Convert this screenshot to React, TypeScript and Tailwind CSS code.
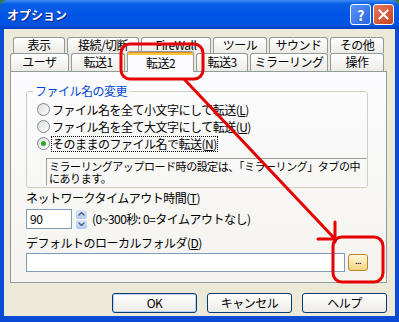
import React from "react";

const jp = "font-['Noto_Sans_CJK_JP','Noto_Sans',sans-serif]";

function Tab({ label, w, selected }: { label: string; w: number; selected?: boolean }) {
  if (selected) {
    return (
      <div
        style={{ width: w }}
        className="relative z-10 -mb-px flex h-[21px] flex-col overflow-hidden rounded-t-[3px] border border-b-0 border-[#919B9C] bg-[#FCFCFE]"
      >
        <div className="h-[1px] bg-[#E68B2C]" />
        <div className="h-[2px] bg-[#FFC83C]" />
        <div className="flex flex-1 items-center justify-center pb-[2px]">{label}</div>
      </div>
    );
  }
  return (
    <div
      style={{ width: w }}
      className="flex h-full items-center justify-center rounded-t-[3px] border border-b-0 border-[#919B9C] bg-gradient-to-b from-white to-[#ECEBE6] pb-px"
    >
      {label}
    </div>
  );
}

function Radio({ checked, children, focus }: { checked?: boolean; children: React.ReactNode; focus?: boolean }) {
  return (
    <div className="flex h-[17px] items-center gap-[2px]">
      <span className="flex size-[13px] items-center justify-center rounded-full border border-[#7C8996] bg-gradient-to-br from-[#DCDCD7] to-white">
        {checked ? <span className="size-[5px] rounded-full bg-[#2FA62F]" /> : null}
      </span>
      <span className={focus ? "outline outline-1 outline-dotted outline-black" : ""}>{children}</span>
    </div>
  );
}

function Btn({ children, def }: { children: React.ReactNode; def?: boolean }) {
  return (
    <button
      type="button"
      className={
        "flex h-[20px] w-[85px] items-center justify-center rounded-[3px] border border-[#003C74] bg-gradient-to-b from-white to-[#ECEBE6] " +
        (def ? "shadow-[inset_0_0_0_1px_#B9D1F8]" : "")
      }
    >
      {children}
    </button>
  );
}

export default function App() {
  return (
    <div
      className={`relative h-[322px] w-[399px] overflow-hidden bg-[#3A7A3A] text-[12px] leading-[14px] tracking-[-0.5px] text-black ${jp}`}
    >
      <div className="flex h-full flex-col overflow-hidden rounded-t-[7px]">
        {/* title bar */}
        <div className="flex h-[29px] shrink-0 items-center bg-[linear-gradient(#3D8CF4_0%,#0A5FE8_14%,#0055E5_50%,#0052E0_85%,#0040C4_100%)] pl-[7px] pr-[5px]">
          <span className="text-[12px] font-bold tracking-normal text-white [text-shadow:1px_1px_0_#0F1F8A]">オプション</span>
          <div className="ml-auto flex gap-[2px]">
            <div className="flex size-[21px] items-center justify-center rounded-[3px] border border-white bg-gradient-to-br from-[#5B95F9] to-[#2663E0] text-[14px] font-bold text-white">
              ?
            </div>
            <div className="flex size-[21px] items-center justify-center rounded-[3px] border border-white bg-gradient-to-br from-[#E9785A] to-[#C8401C]">
              <svg width="11" height="11" viewBox="0 0 11 11">
                <path d="M1.5 1.5 L9.5 9.5 M9.5 1.5 L1.5 9.5" stroke="white" strokeWidth="2" strokeLinecap="square" />
              </svg>
            </div>
          </div>
        </div>

        {/* body */}
        <div className="flex flex-1 flex-col border-x-4 border-b-[6px] border-[#0A4BD6] bg-[#ECE9D8] pl-[6px] pr-[8px] pt-[8px]">
          {/* back row of tabs */}
          <div className="flex h-[16px] gap-[2px] pl-[3px]">
            <Tab label="表示" w={52} />
            <Tab label="接続/切断" w={72} />
            <Tab label="FireWall" w={70} />
            <Tab label="ツール" w={54} />
            <Tab label="サウンド" w={59} />
            <Tab label="その他" w={54} />
          </div>
          {/* front row of tabs */}
          <div className="flex h-[18px] items-end gap-[2px]">
            <Tab label="ユーザ" w={59} />
            <Tab label="転送1" w={54} />
            <Tab label="転送2" w={67} selected />
            <Tab label="転送3" w={52} />
            <Tab label="ミラーリング" w={78} />
            <Tab label="操作" w={54} />
          </div>

          {/* tab page */}
          <div className="flex h-[212px] w-[377px] flex-col border border-[#919B9C] bg-gradient-to-b from-[#FCFCFE] to-[#F4F3EE] px-[15px]">
            <fieldset className="mt-[12px] h-[104px] w-[342px] rounded-[3px] border border-[#D0D0BF] pl-[10px]">
              <legend className="ml-[-4px] px-[2px] text-[#0046D5]">ファイル名の変更</legend>
              <div className="mt-[3px] flex flex-col">
                <Radio>
                  ファイル名を全て小文字にして転送(<u>L</u>)
                </Radio>
                <Radio>
                  ファイル名を全て大文字にして転送(<u>U</u>)
                </Radio>
                <Radio checked focus>
                  そのままのファイル名で転送(<u>N</u>)
                </Radio>
              </div>
              <div className="ml-[9px] mt-[6px] flex h-[27px] flex-col whitespace-nowrap border-l border-t border-[#A0A09A] pl-[2px] pt-[1px] text-[11px] leading-[12px] tracking-[-0.45px]">
                <span>ミラーリングアップロード時の設定は、「ミラーリング」タブの中</span>
                <span>にあります。</span>
              </div>
            </fieldset>

            <div className="mt-[3px]">
              ネットワークタイムアウト時間(<u>T</u>)
            </div>
            <div className="mt-[4px] flex h-[20px] items-center">
              <div className="flex h-[20px] w-[46px] items-center border border-[#7F9DB9] bg-white pl-[3px]">90</div>
              <div className="ml-[4px] flex h-[19px] w-[11px] flex-col gap-px">
                <div className="flex flex-1 items-center justify-center rounded-[2px] bg-gradient-to-b from-[#DDE7FC] to-[#B3C8F5]">
                  <svg width="7" height="4" viewBox="0 0 7 4">
                    <path d="M0.5 3.5 L3.5 0.5 L6.5 3.5" stroke="#4D6185" strokeWidth="1.4" fill="none" />
                  </svg>
                </div>
                <div className="flex flex-1 items-center justify-center rounded-[2px] bg-gradient-to-b from-[#DDE7FC] to-[#B3C8F5]">
                  <svg width="7" height="4" viewBox="0 0 7 4">
                    <path d="M0.5 0.5 L3.5 3.5 L6.5 0.5" stroke="#4D6185" strokeWidth="1.4" fill="none" />
                  </svg>
                </div>
              </div>
              <span className="ml-[5px]">(0~300秒: 0=タイムアウトなし)</span>
            </div>

            <div className="mt-[7px]">
              デフォルトのローカルフォルダ(<u>D</u>)
            </div>
            <div className="mt-[3px] flex items-center gap-[3px]">
              <div className="h-[19px] w-[319px] border border-[#7F9DB9] bg-white" />
              <div className="flex h-[17px] w-[20px] items-center justify-center rounded-[3px] border border-[#B8862B] bg-gradient-to-b from-[#FFF8DC] to-[#F5D27E] pb-[3px] text-[9px]">
                ...
              </div>
            </div>
          </div>

          {/* dialog buttons */}
          <div className="mt-[10px] flex justify-end gap-[10px]">
            <Btn def>OK</Btn>
            <Btn>キャンセル</Btn>
            <Btn>ヘルプ</Btn>
          </div>
        </div>
      </div>

      {/* red annotation drawn over the screenshot */}
      <svg className="pointer-events-none absolute inset-0" width="399" height="322" viewBox="0 0 399 322">
        <g stroke="#E60000" strokeWidth="3" fill="none" strokeLinecap="round">
          <rect x="121" y="44" width="82" height="35" rx="9" />
          <line x1="185" y1="80" x2="335" y2="239" />
          <line x1="335" y1="222" x2="335" y2="242" />
          <line x1="318" y1="239" x2="335" y2="239" />
          <rect x="333" y="237" width="50" height="45" rx="9" />
        </g>
      </svg>
    </div>
  );
}
